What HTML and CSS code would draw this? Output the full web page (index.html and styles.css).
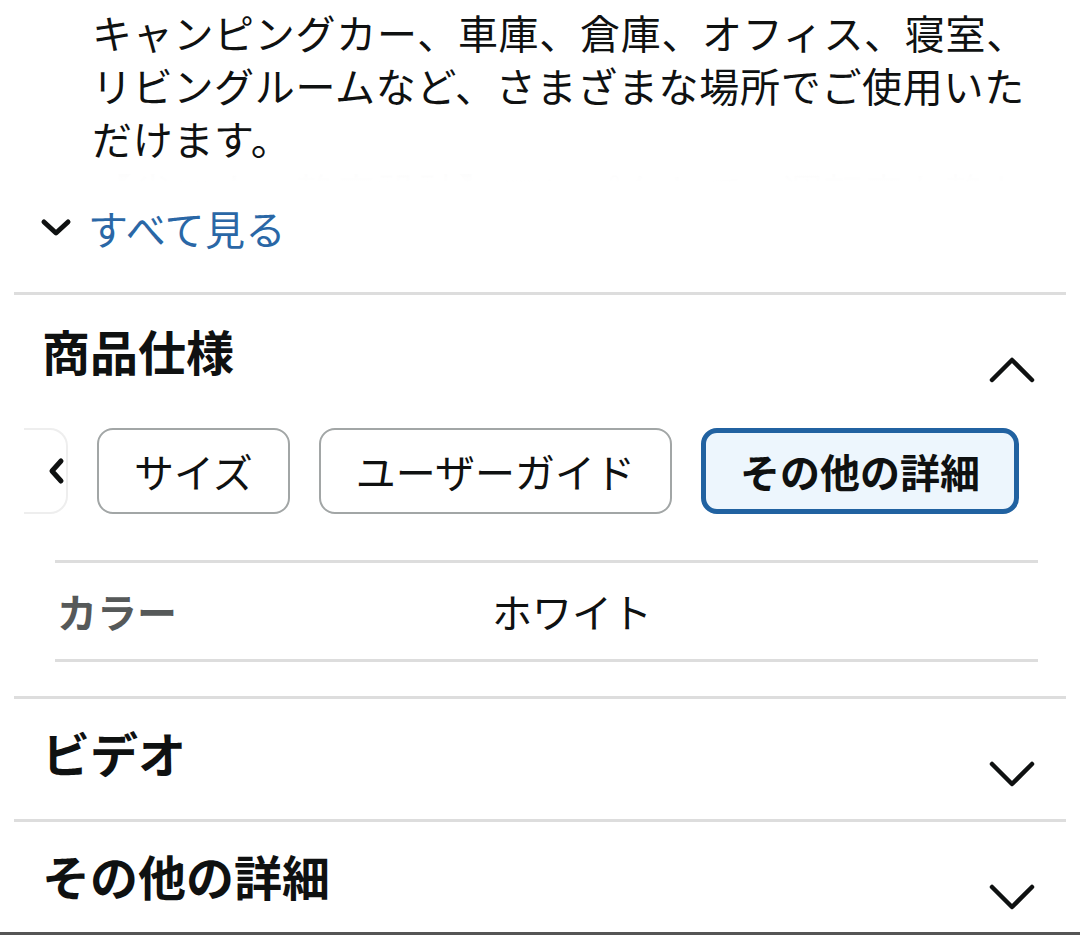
FILE: index.html
```html
<!DOCTYPE html>
<html lang="ja">
<head>
<meta charset="utf-8">
<link rel="stylesheet" href="styles.css">
</head>
<body>
<div class="page">
  <div class="desc">
    <p class="desc-text">キャンピングカー、車庫、倉庫、オフィス、寝室、リビングルームなど、さまざまな場所でご使用いただけます。</p>
    <p class="desc-text">【省エネ・静音設計】コンパクトで、運転音も静かな省エネ仕様です。</p>
    <div class="fade"></div>
  </div>
  <div class="see-all">
    <svg class="see-all-icon" width="32" height="20" viewBox="0 0 32 20"><polyline points="4,4 16,15 28,4" fill="none" stroke="#0f1111" stroke-width="5" stroke-linecap="round" stroke-linejoin="round"/></svg>
    <span class="see-all-text">すべて見る</span>
  </div>
  <div class="divider"></div>

  <section class="section">
    <div class="section-head">
      <h2 class="section-title">商品仕様</h2>
      <svg class="chev" width="48" height="30" viewBox="0 0 48 30"><polyline points="4,26 24,6 44,26" fill="none" stroke="#0f1111" stroke-width="4.5" stroke-linecap="round" stroke-linejoin="round"/></svg>
    </div>
    <div class="tabs">
      <div class="tab-prev">
        <svg width="20" height="30" viewBox="0 0 20 30"><polyline points="15,5 6,15 15,25" fill="none" stroke="#0f1111" stroke-width="5" stroke-linecap="round" stroke-linejoin="round"/></svg>
      </div>
      <div class="tab">サイズ</div>
      <div class="tab">ユーザーガイド</div>
      <div class="tab tab-active">その他の詳細</div>
    </div>
    <div class="spec">
      <div class="spec-row">
        <div class="spec-label">カラー</div>
        <div class="spec-value">ホワイト</div>
      </div>
    </div>
  </section>
  <div class="divider"></div>

  <section class="section collapsed">
    <div class="section-head">
      <h2 class="section-title">ビデオ</h2>
      <svg class="chev" width="48" height="30" viewBox="0 0 48 30"><polyline points="4,6 24,26 44,6" fill="none" stroke="#0f1111" stroke-width="4.5" stroke-linecap="round" stroke-linejoin="round"/></svg>
    </div>
  </section>
  <div class="divider"></div>

  <section class="section collapsed last">
    <div class="section-head">
      <h2 class="section-title">その他の詳細</h2>
      <svg class="chev" width="48" height="30" viewBox="0 0 48 30"><polyline points="4,6 24,26 44,6" fill="none" stroke="#0f1111" stroke-width="4.5" stroke-linecap="round" stroke-linejoin="round"/></svg>
    </div>
  </section>
  <div class="bottom-bar"></div>
</div>
</body>
</html>
```
FILE: styles.css
```css
* { box-sizing: border-box; }
html, body { margin: 0; padding: 0; background: #fff; }
body {
  font-family: "Noto Sans CJK JP", "Noto Sans", sans-serif;
  color: #0f1111;
  width: 1080px;
  height: 935px;
  overflow: hidden;
}
.page { width: 1080px; }

.desc {
  position: relative;
  height: 197px;
  padding: 6px 30px 0 92px;
  overflow: hidden;
}
.desc-text {
  margin: 0;
  font-size: 40px;
  line-height: 53px;
  letter-spacing: 0.7px;
}
.fade {
  position: absolute;
  left: 0; right: 0; bottom: 0;
  height: 36px;
  background: linear-gradient(rgba(255,255,255,0.975), #fff 60%);
}

.see-all {
  display: flex;
  align-items: center;
  height: 62px;
  padding-left: 40px;
  gap: 16px;
  margin-bottom: 33px;
}
.see-all-text {
  font-size: 40px;
  line-height: 1;
  letter-spacing: 0.5px;
  color: #2a67a6;
}

.divider {
  height: 3px;
  background: #dddddd;
  margin: 0 14px;
}

.section { padding: 25px 0 34px; }
.section.collapsed { padding: 23px 0 37px; }
.section.last { padding-bottom: 27px; }
.section-head {
  display: flex;
  justify-content: space-between;
  align-items: flex-start;
  height: 60px;
  padding: 0 44px 0 42px;
}
.section-title {
  margin: 0;
  font-size: 48px;
  line-height: 60px;
  font-weight: 700;
}
.chev { margin-top: 34px; flex: none; }
.collapsed .chev { margin-top: 36px; }

.tabs {
  display: flex;
  align-items: center;
  gap: 29px;
  margin-top: 48px;
  padding-left: 24px;
}
.tab-prev {
  width: 44px;
  height: 86px;
  border: 2px solid #eeeeee;
  border-left: none;
  border-radius: 0 18px 18px 0;
  display: flex;
  align-items: center;
  justify-content: flex-end;
  padding-right: 0;
}
.tab {
  height: 86px;
  display: flex;
  align-items: center;
  padding: 0 35px;
  border: 2px solid #a2a6a6;
  border-radius: 16px;
  font-size: 40px;
  color: #0f1111;
  white-space: nowrap;
}
.tab-active {
  border: 5px solid #2162a1;
  background: #edf6fd;
  font-weight: 700;
  padding: 0 34px;
}

.spec {
  margin: 46px 42px 0 55px;
  border-top: 3px solid #dddddd;
  border-bottom: 3px solid #dddddd;
}
.spec-row {
  display: flex;
  align-items: center;
  height: 96px;
  font-size: 40px;
}
.spec-label {
  width: 437px;
  padding-left: 2px;
  font-weight: 700;
  color: #565959;
}
.spec-value { color: #0f1111; }

.bottom-bar {
  height: 3px;
  background: #555555;
}
```
